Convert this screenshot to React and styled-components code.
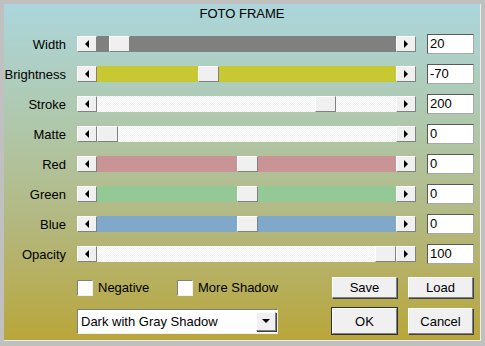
import React from "react";
import styled, { createGlobalStyle, css } from "styled-components";

const GlobalStyle = createGlobalStyle`
  html, body {
    margin: 0;
    padding: 0;
    background: #c0c0c0;
    font-family: "Liberation Sans", Arial, sans-serif;
  }
`;

const raised = css`
  background: #f0f0f0;
  border: 1px solid;
  border-color: #ffffff #808080 #808080 #ffffff;
  box-shadow: 1px 1px 0 #404040;
`;

const Screen = styled.div`
  width: 485px;
  height: 346px;
  padding: 4px 0 0 4px;
  box-sizing: border-box;
`;

const Dialog = styled.div`
  width: 477px;
  height: 337px;
  box-sizing: border-box;
  border-right: 1px solid #ececec;
  border-bottom: 1px solid #ececec;
  background: linear-gradient(#acd6dc 0%, #afc8ac 35%, #b3b880 65%, #b9a63a 100%);
  display: flex;
  flex-direction: column;
  color: #000;
`;

const Title = styled.div`
  height: 25px;
  line-height: 20px;
  text-align: center;
  font-size: 13px;
`;

const Rows = styled.div`
  display: flex;
  flex-direction: column;
`;

const Row = styled.div`
  height: 30px;
  display: grid;
  grid-template-columns: 62px 339px 47px;
  column-gap: 11px;
  align-items: center;
`;

const Label = styled.div`
  text-align: right;
  font-size: 13px;
  white-space: nowrap;
`;

const ScrollBar = styled.div`
  display: flex;
  height: 16px;
`;

const ArrowButton = styled.div`
  ${raised};
  width: 18px;
  height: 14px;
  box-shadow: none;
  display: flex;
  align-items: center;
  justify-content: center;
  flex: none;
`;

const Arrow = styled.span`
  width: 0;
  height: 0;
  border-top: 4px solid transparent;
  border-bottom: 4px solid transparent;
  ${({ $dir }) =>
    $dir === "left"
      ? css`border-right: 4px solid #000;`
      : css`border-left: 4px solid #000;`}
`;

const plainTrack = css`
  background: repeating-conic-gradient(#ffffff 0 25%, #f2f2f2 0 50%) 0 0 / 2px 2px;
`;

const Track = styled.div`
  position: relative;
  flex: 1;
  ${({ $color }) => ($color ? css`background: ${$color};` : plainTrack)}
`;

const Thumb = styled.div`
  ${raised};
  position: absolute;
  top: 0;
  width: 19px;
  height: 14px;
  box-shadow: none;
`;

const ValueBox = styled.div`
  height: 20px;
  box-sizing: border-box;
  background: #fff;
  border: 1px solid #5a5a5a;
  border-right-color: #a8a8a8;
  border-bottom-color: #a8a8a8;
  font-size: 13px;
  line-height: 18px;
  padding-left: 2px;
`;

const OptionsRow = styled.div`
  display: flex;
  align-items: center;
  height: 35px;
  padding-left: 73px;
  margin-top: 1px;
`;

const Check = styled.label`
  display: flex;
  align-items: center;
  gap: 5px;
  font-size: 13px;
  white-space: nowrap;
  width: ${({ $w }) => ($w ? `${$w}px` : "auto")};
`;

const Box = styled.span`
  width: 14px;
  height: 14px;
  background: #fff;
  border: 1px solid;
  border-color: #808080 #f0f0f0 #f0f0f0 #808080;
`;

const Spacer = styled.div`
  flex: 1;
`;

const Buttons = styled.div`
  display: flex;
  gap: 11px;
  padding-right: 7px;
`;

const Button = styled.div`
  ${raised};
  width: 63px;
  height: ${({ $tall }) => ($tall ? "24px" : "19px")};
  box-sizing: content-box;
  display: flex;
  align-items: center;
  justify-content: center;
  font-size: 13px;
  ${({ $default }) =>
    $default &&
    css`
      outline: 1px solid #303030;
    `}
`;

const BottomRow = styled.div`
  display: flex;
  align-items: center;
  padding-left: 73px;
  height: 32px;
`;

const Select = styled.div`
  width: 196px;
  height: 23px;
  background: #fff;
  border: 1px solid;
  border-color: #808080 #f0f0f0 #f0f0f0 #808080;
  display: flex;
  align-items: center;
  justify-content: space-between;
  font-size: 13px;
  padding-left: 3px;
`;

const SelectButton = styled.div`
  ${raised};
  width: 18px;
  height: 17px;
  margin-right: 1px;
  display: flex;
  align-items: center;
  justify-content: center;
`;

const DownArrow = styled.span`
  width: 0;
  height: 0;
  border-left: 4px solid transparent;
  border-right: 4px solid transparent;
  border-top: 4px solid #000;
`;

const sliders = [
  { label: "Width", value: "20", pos: 12, color: "#808080" },
  { label: "Brightness", value: "-70", pos: 101, color: "#c8c832" },
  { label: "Stroke", value: "200", pos: 218 },
  { label: "Matte", value: "0", pos: 0 },
  { label: "Red", value: "0", pos: 140, color: "#c89496" },
  { label: "Green", value: "0", pos: 140, color: "#94c894" },
  { label: "Blue", value: "0", pos: 140, color: "#80a8c8" },
  { label: "Opacity", value: "100", pos: 278 },
];

const Slider = ({ label, value, pos, color }) => (
  <Row>
    <Label>{label}</Label>
    <ScrollBar>
      <ArrowButton>
        <Arrow $dir="left" />
      </ArrowButton>
      <Track $color={color}>
        <Thumb style={{ left: pos }} />
      </Track>
      <ArrowButton>
        <Arrow $dir="right" />
      </ArrowButton>
    </ScrollBar>
    <ValueBox>{value}</ValueBox>
  </Row>
);

const App = () => (
  <Screen>
    <GlobalStyle />
    <Dialog>
      <Title>FOTO FRAME</Title>
      <Rows>
        {sliders.map((s) => (
          <Slider key={s.label} {...s} />
        ))}
      </Rows>
      <OptionsRow>
        <Check $w={100}>
          <Box />
          Negative
        </Check>
        <Check>
          <Box />
          More Shadow
        </Check>
        <Spacer />
        <Buttons>
          <Button>Save</Button>
          <Button>Load</Button>
        </Buttons>
      </OptionsRow>
      <BottomRow>
        <Select>
          Dark with Gray Shadow
          <SelectButton>
            <DownArrow />
          </SelectButton>
        </Select>
        <Spacer />
        <Buttons>
          <Button $tall $default>
            OK
          </Button>
          <Button $tall>Cancel</Button>
        </Buttons>
      </BottomRow>
    </Dialog>
  </Screen>
);

export default App;
